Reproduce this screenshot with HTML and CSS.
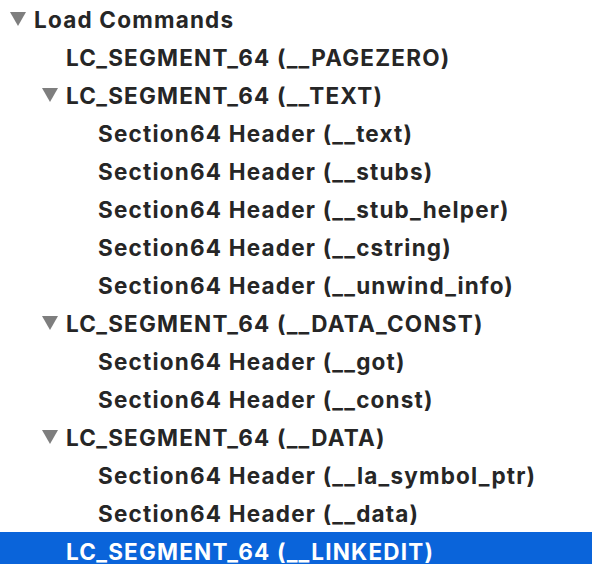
FILE: index.html
```html
<!DOCTYPE html>
<html>
<head>
<meta charset="utf-8">
<link rel="stylesheet" href="styles.css">
</head>
<body>
<ul class="tree">
  <li class="row l0"><span class="disc"></span><span class="label">Load Commands</span></li>
  <li class="row l1"><span class="nodisc"></span><span class="label">LC_SEGMENT_64 (__PAGEZERO)</span></li>
  <li class="row l1"><span class="disc"></span><span class="label">LC_SEGMENT_64 (__TEXT)</span></li>
  <li class="row l2"><span class="nodisc"></span><span class="label">Section64 Header (__text)</span></li>
  <li class="row l2"><span class="nodisc"></span><span class="label">Section64 Header (__stubs)</span></li>
  <li class="row l2"><span class="nodisc"></span><span class="label">Section64 Header (__stub_helper)</span></li>
  <li class="row l2"><span class="nodisc"></span><span class="label">Section64 Header (__cstring)</span></li>
  <li class="row l2"><span class="nodisc"></span><span class="label">Section64 Header (__unwind_info)</span></li>
  <li class="row l1"><span class="disc"></span><span class="label">LC_SEGMENT_64 (__DATA_CONST)</span></li>
  <li class="row l2"><span class="nodisc"></span><span class="label">Section64 Header (__got)</span></li>
  <li class="row l2"><span class="nodisc"></span><span class="label">Section64 Header (__const)</span></li>
  <li class="row l1"><span class="disc"></span><span class="label">LC_SEGMENT_64 (__DATA)</span></li>
  <li class="row l2"><span class="nodisc"></span><span class="label">Section64 Header (__la_symbol_ptr)</span></li>
  <li class="row l2"><span class="nodisc"></span><span class="label">Section64 Header (__data)</span></li>
  <li class="row l1 selected"><span class="nodisc"></span><span class="label">LC_SEGMENT_64 (__LINKEDIT)</span></li>
</ul>
</body>
</html>
```
FILE: styles.css
```css
html, body {
  margin: 0;
  padding: 0;
  background: #ffffff;
  overflow: hidden;
}
.tree {
  list-style: none;
  margin: 0;
  padding: 0;
  font-family: "Inter", "Noto Sans", sans-serif;
  font-weight: 700;
  font-size: 22.5px;
  letter-spacing: 1.2px;
  color: #262626;
}
.row {
  display: flex;
  align-items: center;
  height: 38px;
  white-space: nowrap;
}
.l0 { padding-left: 10px; }
.l1 { padding-left: 42px; }
.l2 { padding-left: 74px; }
.disc, .nodisc {
  width: 16px;
  height: 14px;
  margin-right: 8px;
  flex: none;
}
.disc {
  background: #7e7e7e;
  clip-path: polygon(0 0, 100% 0, 50% 100%);
}
.selected {
  background: #0a64da;
  color: #ffffff;
}
```
